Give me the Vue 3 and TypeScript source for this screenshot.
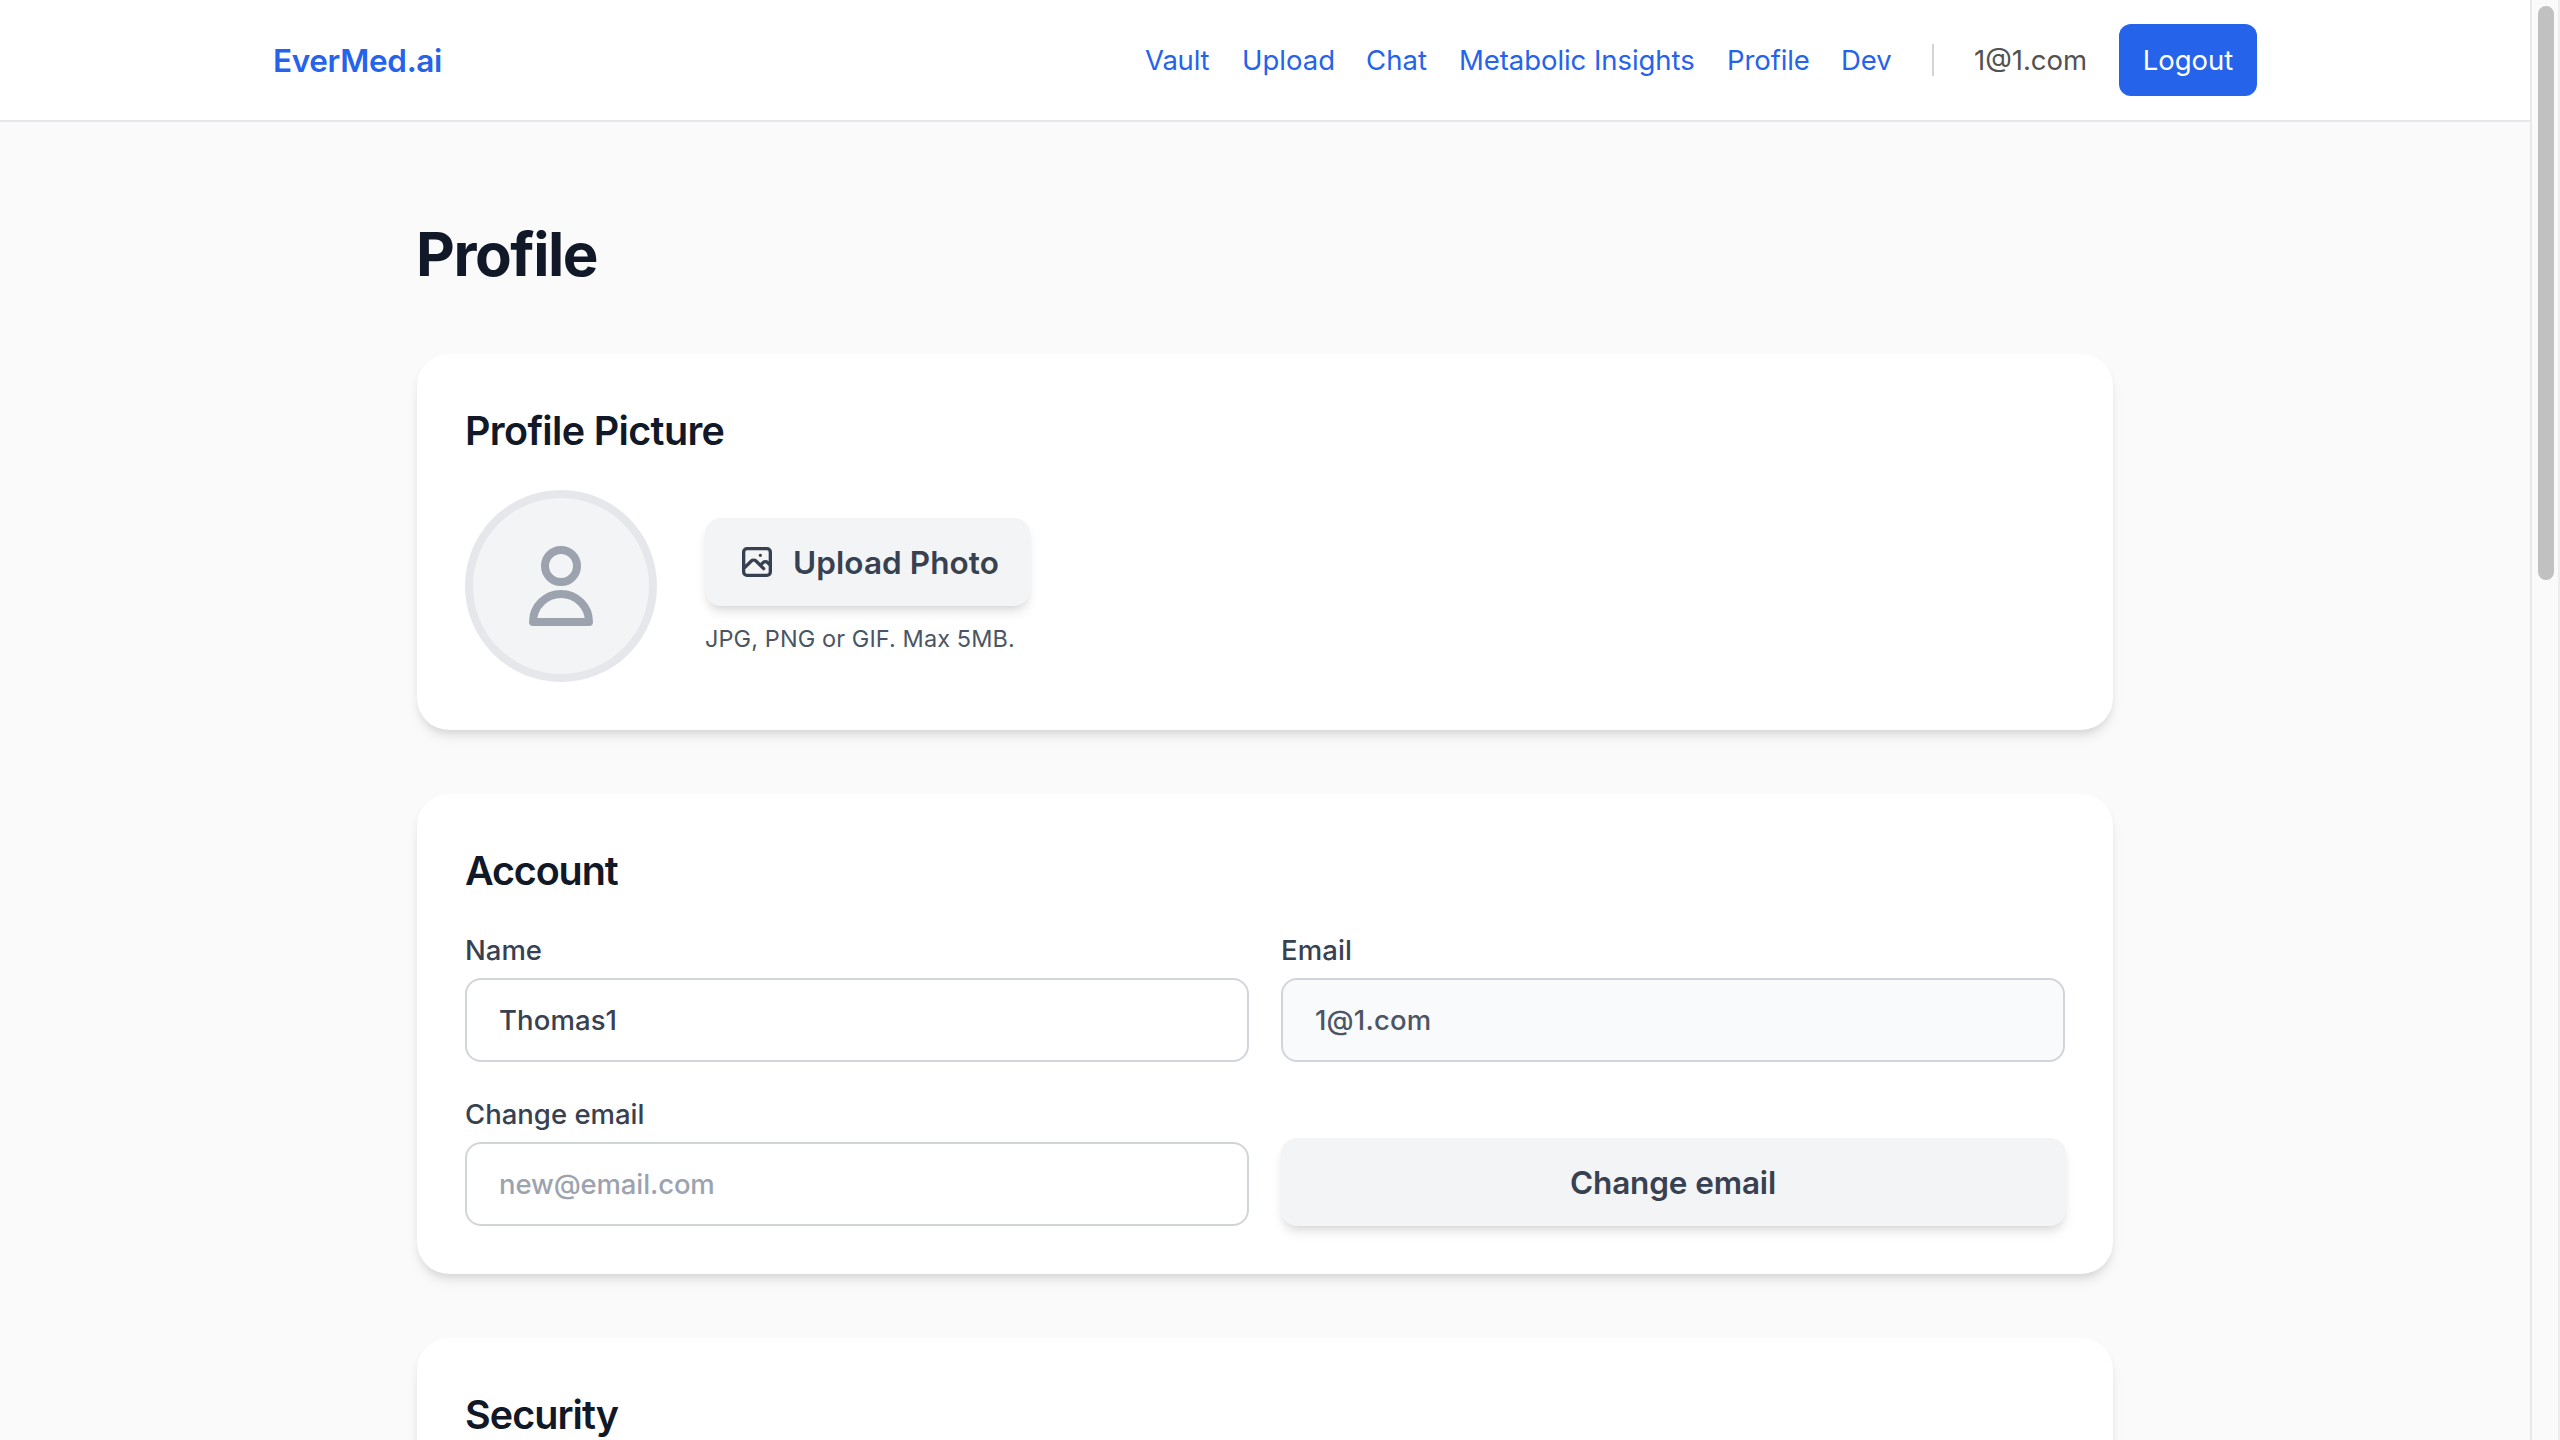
<script setup lang="ts">
import { ref } from 'vue'

interface NavLink {
  label: string
  width: number
  spacing: number
}

const links: NavLink[] = [
  { label: 'Vault', width: 65, spacing: -0.2 },
  { label: 'Upload', width: 92, spacing: 0 },
  { label: 'Chat', width: 61, spacing: 0.1 },
  { label: 'Metabolic Insights', width: 236, spacing: -0.06 },
  { label: 'Profile', width: 82, spacing: -0.1 },
  { label: 'Dev', width: 51, spacing: 0 },
]

const account = '1@1.com'
const name = ref('Thomas1')
const email = ref(account)
const newEmail = ref('')
</script>

<template>
  <div class="window">
    <div class="page">
      <header class="header">
        <div class="header-inner">
          <a class="logo">EverMed.ai</a>
          <nav class="nav">
            <a
              v-for="link in links"
              :key="link.label"
              class="nav-link"
              :style="{ width: link.width + 'px', letterSpacing: link.spacing + 'px' }"
            >{{ link.label }}</a>
            <div class="divider"></div>
            <span class="user">{{ account }}</span>
            <button class="logout" type="button">Logout</button>
          </nav>
        </div>
      </header>

      <main class="main">
        <h1 class="title">Profile</h1>

        <section class="card">
          <h2 class="heading picture-heading">Profile Picture</h2>
          <div class="picture-row">
            <div class="avatar">
              <svg class="avatar-icon" viewBox="0 0 24 24" fill="none" stroke="currentColor" stroke-width="2" stroke-linecap="round" stroke-linejoin="round">
                <path d="M16 7a4 4 0 11-8 0 4 4 0 018 0zM12 14a7 7 0 00-7 7h14a7 7 0 00-7-7z" />
              </svg>
            </div>
            <div class="picture-actions">
              <button class="soft-button upload" type="button">
                <svg class="photo-icon" viewBox="0 0 24 24" fill="none" stroke="currentColor" stroke-width="2" stroke-linecap="round" stroke-linejoin="round">
                  <path d="M4 16l4.586-4.586a2 2 0 012.828 0L16 16m-2-2l1.586-1.586a2 2 0 012.828 0L20 14m-6-6h.01M6 20h12a2 2 0 002-2V6a2 2 0 00-2-2H6a2 2 0 00-2 2v12a2 2 0 002 2z" />
                </svg>
                <span class="button-text">Upload Photo</span>
              </button>
              <p class="hint">JPG, PNG or GIF. Max 5MB.</p>
            </div>
          </div>
        </section>

        <section class="card">
          <h2 class="heading account-heading">Account</h2>
          <div class="form">
            <label class="field">
              <span class="label">Name</span>
              <input v-model="name" class="input" type="text" />
            </label>
            <label class="field">
              <span class="label email-label">Email</span>
              <input v-model="email" class="input readonly" type="text" readonly />
            </label>
            <label class="field">
              <span class="label">Change email</span>
              <input v-model="newEmail" class="input new-email" type="text" placeholder="new@email.com" />
            </label>
            <button class="soft-button change" type="button">
              <span class="button-text">Change email</span>
            </button>
          </div>
        </section>

        <section class="card">
          <h2 class="heading security-heading">Security</h2>
        </section>
      </main>
    </div>

    <div class="scrollbar">
      <div class="thumb"></div>
    </div>
  </div>
</template>

<style>
body {
  overflow: hidden;
}
</style>

<style scoped>
.window {
  display: flex;
  width: 2560px;
  height: 1440px;
  overflow: hidden;
  background: #fafafa;
  font-family: Inter, "Liberation Sans", sans-serif;
  font-size: 27.5px;
  line-height: 40px;
}

.window * {
  box-sizing: border-box;
}

.page {
  width: 2530px;
  height: 1440px;
  overflow: hidden;
}

.header {
  height: 122px;
  background: #fff;
  border-bottom: 2px solid #e5e7eb;
}

.header-inner {
  display: flex;
  align-items: center;
  justify-content: space-between;
  width: 2048px;
  height: 120px;
  margin: 0 auto;
  padding: 0 32px;
}

.logo {
  padding-top: 2px;
  color: #2563eb;
  font-size: 31.5px;
  font-weight: 600;
  letter-spacing: -0.33px;
}

.nav {
  display: flex;
  align-items: center;
  gap: 32px;
}

.nav-link {
  color: #2563eb;
  white-space: nowrap;
}

.divider {
  width: 2px;
  height: 32px;
  margin: 0 8px;
  background: #d4d4d4;
}

.user {
  width: 113px;
  color: #525252;
  white-space: nowrap;
}

.logout {
  width: 138px;
  height: 72px;
  padding: 0;
  border: 0;
  border-radius: 12px;
  background: #2563eb;
  color: #fff;
  font: inherit;
}

.main {
  display: flex;
  flex-direction: column;
  gap: 64px;
  width: 1696px;
  margin: 0 auto;
  padding: 96px 0;
}

.title {
  margin: 0 0 0 -1px;
  color: #111827;
  font-size: 60px;
  font-weight: 700;
  line-height: 72px;
  letter-spacing: -1.45px;
}

.card {
  padding: 48px;
  border-radius: 32px;
  background: #fff;
  box-shadow: 0 8px 12px -2px rgba(0, 0, 0, 0.1), 0 4px 8px -4px rgba(0, 0, 0, 0.1);
}

.heading {
  margin: 0 0 31px;
  padding-top: 1px;
  color: #111827;
  font-size: 39.5px;
  font-weight: 600;
  line-height: 56px;
}

.picture-heading {
  letter-spacing: -0.65px;
}

.account-heading {
  letter-spacing: -1.15px;
}

.security-heading {
  letter-spacing: -0.95px;
}

.picture-row {
  display: flex;
  align-items: center;
  gap: 48px;
}

.avatar {
  display: flex;
  align-items: center;
  justify-content: center;
  width: 192px;
  height: 192px;
  border: 8px solid #e5e7eb;
  border-radius: 50%;
  background: #f3f4f6;
  color: #9ca3af;
}

.avatar-icon {
  width: 96px;
  height: 96px;
}

.picture-actions {
  display: flex;
  flex-direction: column;
  align-items: flex-start;
  gap: 16px;
}

.soft-button {
  display: flex;
  align-items: center;
  justify-content: center;
  height: 88px;
  padding: 0;
  border: 0;
  border-radius: 16px;
  background: #f3f4f6;
  box-shadow: 0 8px 12px -2px rgba(0, 0, 0, 0.1), 0 4px 8px -4px rgba(0, 0, 0, 0.1);
  color: #374151;
  font-family: inherit;
  font-size: 31.5px;
  font-weight: 600;
  line-height: 48px;
}

.button-text {
  padding-top: 2px;
}

.upload {
  justify-content: flex-start;
  gap: 16px;
  width: 325px;
  padding: 0 32px;
  letter-spacing: 0.08px;
  white-space: nowrap;
}

.photo-icon {
  flex: none;
  width: 40px;
  height: 40px;
}

.hint {
  height: 32px;
  margin: 0;
  padding-top: 1px;
  color: #4b5563;
  font-size: 23.5px;
  line-height: 32px;
  letter-spacing: 0.09px;
}

.form {
  display: grid;
  grid-template-columns: 1fr 1fr;
  align-items: end;
  gap: 32px;
}

.field {
  display: flex;
  flex-direction: column;
  gap: 8px;
}

.label {
  color: #374151;
  font-weight: 500;
}

.email-label {
  letter-spacing: 0.1px;
}

.input {
  width: 100%;
  height: 84px;
  padding: 0 32px;
  border: 2px solid #d1d5db;
  border-radius: 16px;
  outline: none;
  background: #fff;
  color: #374151;
  font: inherit;
  font-weight: 500;
  letter-spacing: 0.1px;
}

.readonly {
  background: #f9fafb;
  color: #4b5563;
  letter-spacing: 0.2px;
}

.new-email {
  letter-spacing: -0.13px;
}

.input::placeholder {
  color: #9ca3af;
  opacity: 1;
}

.change {
  margin: 0 -0.5px;
  letter-spacing: -0.12px;
}

.scrollbar {
  width: 30px;
  height: 1440px;
  padding: 6px 4px 0 6px;
  border-left: 2px solid #e8e8e8;
  border-right: 2px solid #ededed;
  background: #fafafa;
}

.thumb {
  width: 16px;
  height: 574px;
  border-radius: 8px;
  background: #c1c1c1;
}
</style>
